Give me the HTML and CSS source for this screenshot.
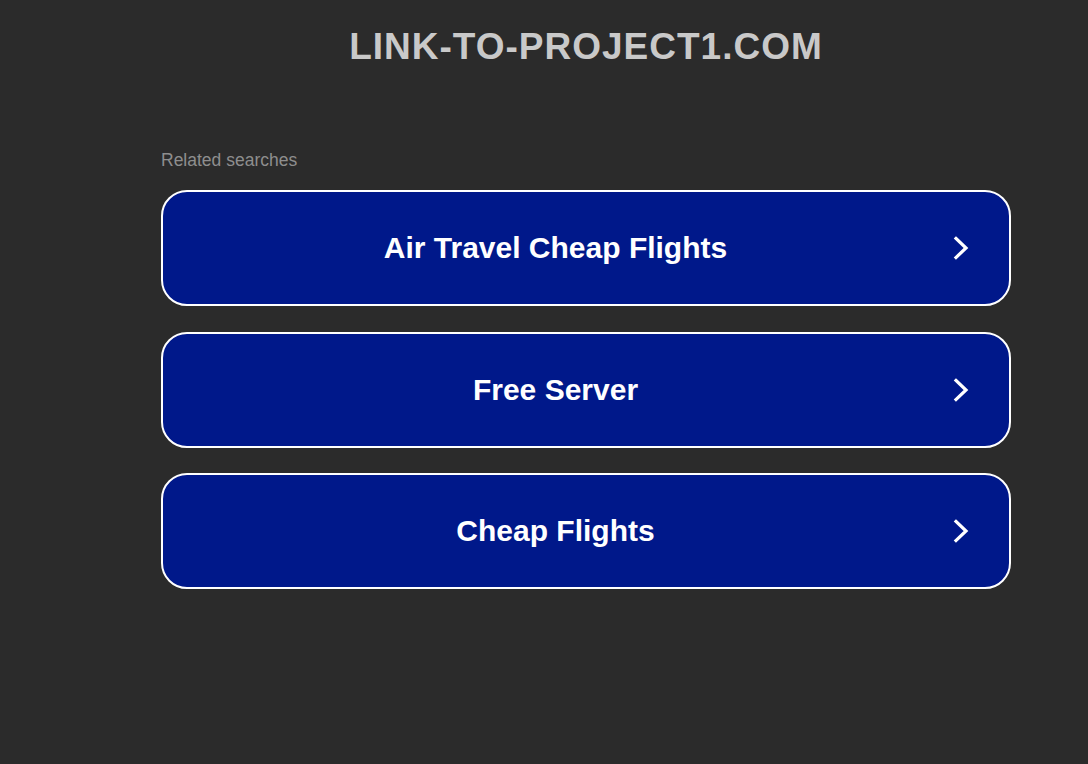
FILE: index.html
```html
<!DOCTYPE html>
<html lang="en">
<head>
<meta charset="utf-8">
<title>link-to-project1.com</title>
<link rel="stylesheet" href="styles.css">
</head>
<body>
<div class="page">
  <header class="header">
    <h1 class="domain">LINK-TO-PROJECT1.COM</h1>
  </header>
  <main class="content">
    <p class="label">Related searches</p>
    <ul class="links">
      <li><a class="link" href="#"><span class="text">Air Travel Cheap Flights</span><svg class="chev" viewBox="0 0 16 26" width="16" height="26"><path d="M3 3.5 L13 13 L3 22.5" fill="none" stroke="#fff" stroke-width="3.2" stroke-linecap="square" stroke-linejoin="miter"/></svg></a></li>
      <li><a class="link" href="#"><span class="text">Free Server</span><svg class="chev" viewBox="0 0 16 26" width="16" height="26"><path d="M3 3.5 L13 13 L3 22.5" fill="none" stroke="#fff" stroke-width="3.2" stroke-linecap="square" stroke-linejoin="miter"/></svg></a></li>
      <li><a class="link" href="#"><span class="text">Cheap Flights</span><svg class="chev" viewBox="0 0 16 26" width="16" height="26"><path d="M3 3.5 L13 13 L3 22.5" fill="none" stroke="#fff" stroke-width="3.2" stroke-linecap="square" stroke-linejoin="miter"/></svg></a></li>
    </ul>
  </main>
</div>
</body>
</html>
```
FILE: styles.css
```css
html, body {
  margin: 0;
  padding: 0;
  background: #2b2b2b;
  font-family: Arial, "Liberation Sans", sans-serif;
}
.page {
  width: 850px;
  min-height: 764px;
  margin-left: 161px;
}
.header {
  padding-top: 26px;
  text-align: center;
}
.domain {
  margin: 0;
  font-size: 37px;
  line-height: 42px;
  font-weight: bold;
  letter-spacing: 1px;
  color: #c9c9c9;
}
.content {
  padding-top: 82px;
}
.label {
  margin: 0 0 20px 0;
  font-size: 17.5px;
  line-height: 20px;
  color: #8e8e8e;
}
.links {
  list-style: none;
  margin: 0;
  padding: 0;
  display: flex;
  flex-direction: column;
  gap: 25.5px;
}
.link {
  display: flex;
  align-items: center;
  height: 116px;
  box-sizing: border-box;
  border: 2px solid #ffffff;
  border-radius: 26px;
  background: #00188a;
  color: #ffffff;
  text-decoration: none;
  padding: 0 40px 0 0;
}
.text {
  flex: 1;
  text-align: center;
  font-size: 30px;
  font-weight: bold;
}
.chev {
  flex: none;
  margin-left: 5px;
}
```
